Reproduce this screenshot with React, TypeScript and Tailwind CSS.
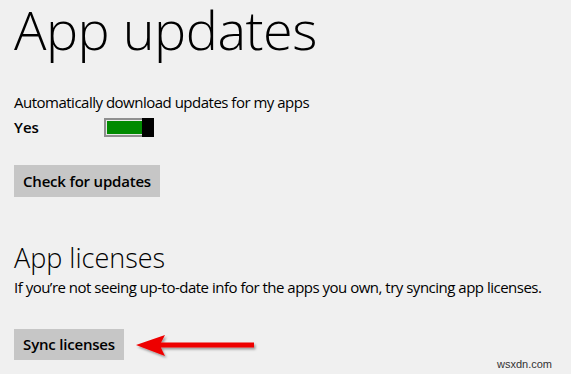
import React from "react";

export default function App() {
  return (
    <div
      className="relative w-[571px] h-[374px] overflow-hidden bg-[#f0f0f0] text-black"
      style={{ fontFamily: '"Open Sans", "Noto Sans", sans-serif' }}
    >
      <div className="flex flex-col pl-[14px]">
        <div className="h-[58px]">
          <h1 className="text-[54px] leading-[58px] font-light tracking-[-0.5px]">App updates</h1>
        </div>
        <p className="mt-[34px] text-[15px] leading-[20px] tracking-[-0.5px]">
          Automatically download updates for my apps
        </p>
        <div className="mt-[5px] flex items-center">
          <span className="w-[90px] text-[15px] leading-[20px] font-semibold">Yes</span>
          <div className="flex h-[19px] w-[50px]">
            <div className="flex flex-1 bg-[#8f8f8f] p-[2px] pr-0">
              <div className="flex-1 border-[1px] border-r-0 border-[#e8e8e8] bg-[#008a00]" />
            </div>
            <div className="w-[12px] bg-black" />
          </div>
        </div>
        <button className="mt-[28px] flex h-[32px] w-[146px] items-center justify-center bg-[#c6c6c6] text-[15px] font-semibold tracking-[-0.2px]">
          Check for updates
        </button>
        <h2 className="mt-[46px] text-[27px] leading-[30px] font-light">App licenses</h2>
        <p className="mt-[4px] text-[15px] leading-[20px] tracking-[-0.5px]">
          If you’re not seeing up-to-date info for the apps you own, try syncing app licenses.
        </p>
        <div className="mt-[31px] flex items-center">
          <button className="flex h-[31px] w-[110px] items-center justify-center bg-[#c6c6c6] text-[15px] font-semibold tracking-[-0.2px]">
            Sync licenses
          </button>
          <svg width="125" height="30" viewBox="0 0 125 30" className="ml-[11px] mt-[3px]">
            <defs>
              <filter id="sh" x="-10%" y="-30%" width="130%" height="180%">
                <feDropShadow dx="1.5" dy="2" stdDeviation="1.2" floodColor="#000" floodOpacity="0.35" />
              </filter>
            </defs>
            <g filter="url(#sh)">
              <path d="M1,14 L30,4 Q27,10 26,11.5 L119,11.5 L119,16.5 L26,16.5 Q27,19 30,25 Z" fill="#ee0000" />
            </g>
          </svg>
        </div>
      </div>
      <span
        className="absolute left-[497px] top-[356px] text-[11px] text-[#333]"
        style={{ fontFamily: '"Liberation Sans", Arial, sans-serif' }}
      >
        wsxdn.com
      </span>
    </div>
  );
}
